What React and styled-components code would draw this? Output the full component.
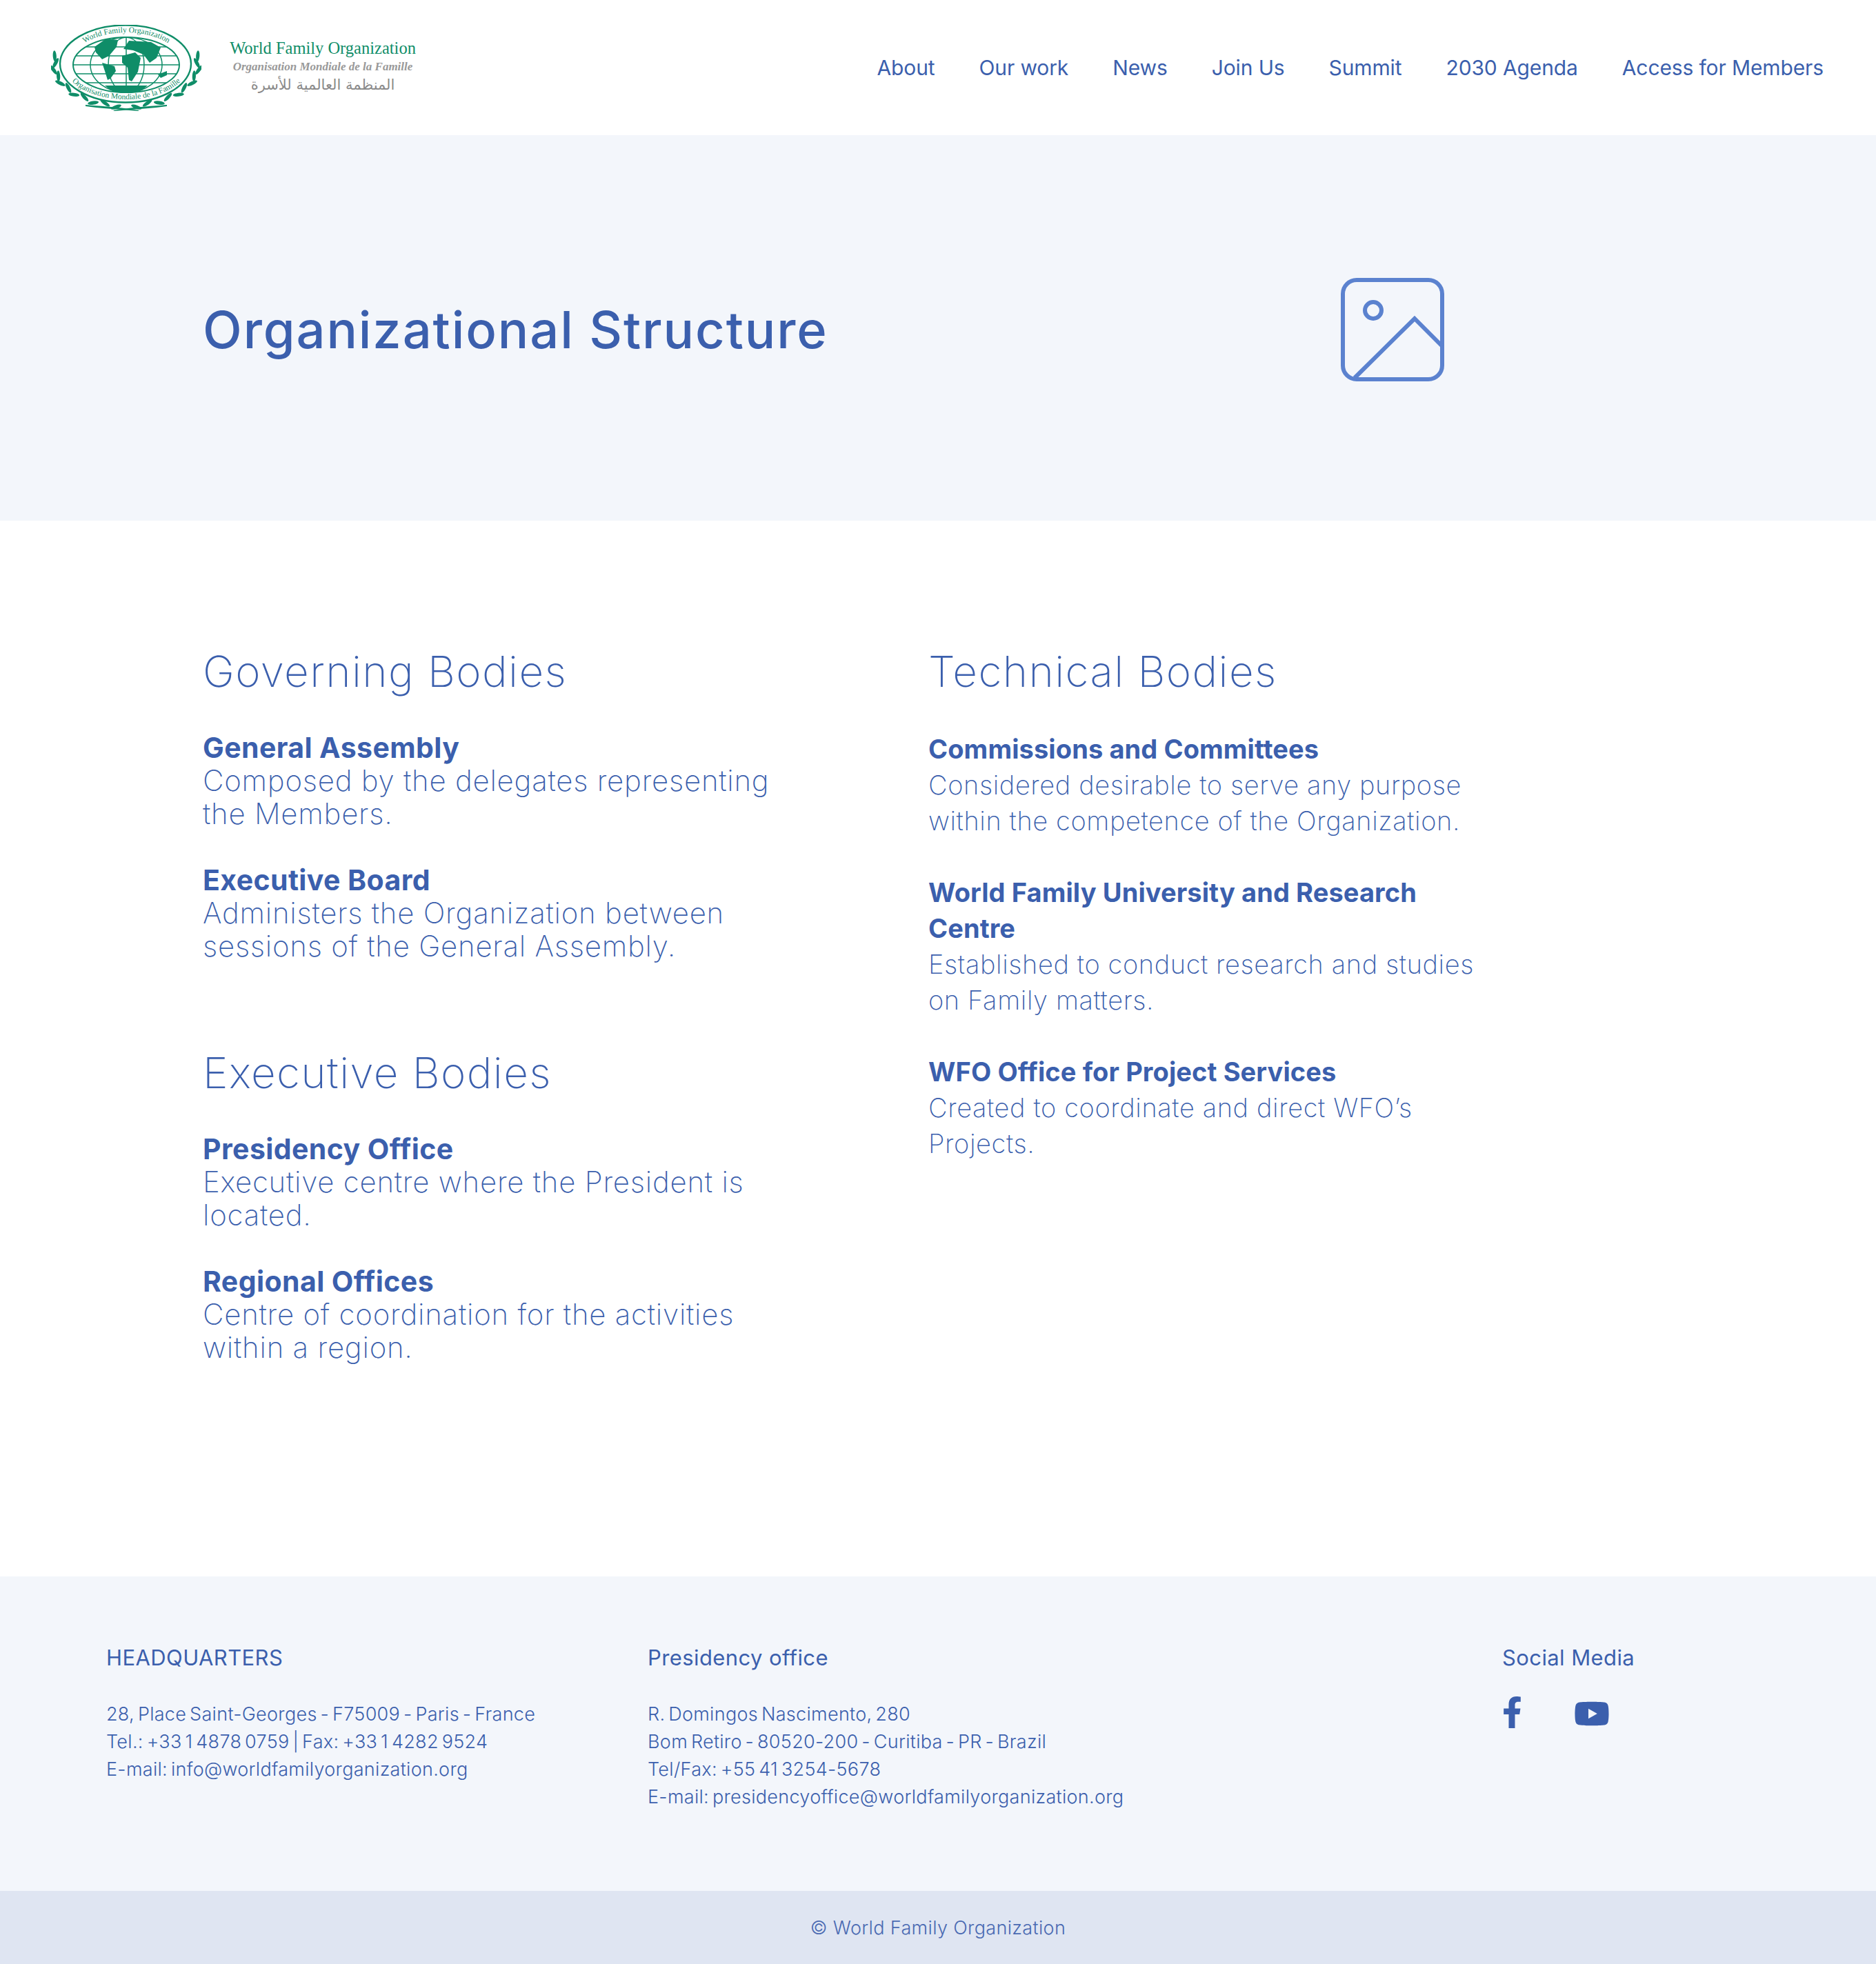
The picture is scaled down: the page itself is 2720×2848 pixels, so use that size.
import React from "react";
import styled, { createGlobalStyle } from "styled-components";
import { FaFacebookF, FaYoutube } from "react-icons/fa";

const BLUE = "#3b5fad";
const PALE = "#f3f6fb";
const GREEN = "#0f8d68";

const GlobalStyle = createGlobalStyle`
  html, body {
    margin: 0;
    padding: 0;
    background: #fff;
    font-family: Inter, "Open Sans", sans-serif;
    color: ${BLUE};
  }
  h1, h2, h3, p, ul {
    margin: 0;
    padding: 0;
  }
  ul { list-style: none; }
`;

const Page = styled.div`
  width: 2720px;
`;

const Header = styled.header`
  height: 196px;
  display: flex;
  align-items: center;
  justify-content: space-between;
  padding: 0 76px 0 74px;
  box-sizing: border-box;
`;

const Brand = styled.div`
  display: flex;
  align-items: center;
  gap: 44px;
`;

const BrandText = styled.div`
  display: flex;
  flex-direction: column;
  align-items: center;
  width: 264px;
  margin-top: -3px;
`;

const BrandEn = styled.span`
  font-family: "Liberation Serif", serif;
  font-size: 24.5px;
  line-height: 27px;
  color: ${GREEN};
  white-space: nowrap;
`;

const BrandFr = styled.span`
  font-family: "Liberation Serif", serif;
  font-style: italic;
  font-weight: bold;
  font-size: 17px;
  line-height: 27px;
  color: #999;
  white-space: nowrap;
`;

const BrandAr = styled.span`
  font-family: "DejaVu Sans", sans-serif;
  font-size: 21px;
  line-height: 27px;
  color: #8a8a8a;
  white-space: nowrap;
`;

const Nav = styled.ul`
  display: flex;
  gap: 64px;
`;

const NavItem = styled.li`
  font-size: 30px;
  font-weight: 400;
  letter-spacing: -0.12px;
  line-height: 36px;
  white-space: nowrap;
`;

const Hero = styled.section`
  height: 559px;
  background: ${PALE};
  display: grid;
  grid-template-columns: 1650px 150px;
  align-items: center;
  padding: 4px 0 0 294px;
  box-sizing: border-box;
`;

const HeroTitle = styled.h1`
  font-size: 74px;
  font-weight: 500;
  letter-spacing: 1.9px;
  line-height: 88px;
`;

const HeroIcon = styled.svg`
  display: block;
  width: 150px;
  height: 150px;
  fill: none;
  stroke: #5b82cf;
  stroke-width: 6;
`;

const Main = styled.main`
  height: 1531px;
  display: grid;
  grid-template-columns: 1052px 840px;
  padding: 180px 0 0 294px;
  box-sizing: border-box;
`;

const Column = styled.div`
  display: flex;
  flex-direction: column;
`;

const SectionTitle = styled.h2`
  font-size: 62px;
  font-weight: 250;
  letter-spacing: 1.4px;
  line-height: 78px;
  margin-bottom: ${(p) => p.$after}px;
`;

const Group = styled.div`
  display: flex;
  flex-direction: column;
  gap: ${(p) => p.$gap}px;
  margin-bottom: ${(p) => p.$after || 0}px;
`;

const Item = styled.div`
  max-width: ${(p) => (p.$wide ? 850 : 810)}px;
`;

const ItemTitle = styled.h3`
  font-size: ${(p) => (p.$wide ? 41 : 38)}px;
  font-weight: 700;
  letter-spacing: ${(p) => (p.$wide ? 0.4 : 0.1)}px;
  line-height: ${(p) => (p.$wide ? 48 : 52)}px;
`;

const ItemText = styled.p`
  font-size: ${(p) => (p.$wide ? 42 : 38)}px;
  font-weight: 250;
  letter-spacing: ${(p) => (p.$wide ? 0.75 : 0.6)}px;
  line-height: ${(p) => (p.$wide ? 48 : 52)}px;
`;

const Footer = styled.footer`
  height: 456px;
  background: ${PALE};
  display: grid;
  grid-template-columns: 785px 1239px 1fr;
  padding: 94px 0 0 154px;
  box-sizing: border-box;
`;

const FooterTitle = styled.h3`
  font-size: 31px;
  font-weight: 400;
  letter-spacing: 0.4px;
  line-height: 48px;
  margin-bottom: 38px;
`;

const FooterLine = styled.p`
  font-size: 27px;
  font-weight: 300;
  letter-spacing: 0.3px;
  word-spacing: -3px;
  line-height: 40px;
  white-space: nowrap;
`;

const Socials = styled.div`
  display: flex;
  align-items: center;
  gap: 75px;
  height: 46px;
  margin-top: -6px;
  color: ${BLUE};
`;

const FacebookIcon = styled(FaFacebookF)`
  width: 29px;
  height: 46px;
`;

const YoutubeIcon = styled(FaYoutube)`
  width: 52px;
  height: 46px;
  margin-top: 4px;
`;

const CopyRight = styled.div`
  height: 106px;
  background: #dfe5f2;
  display: flex;
  align-items: center;
  justify-content: center;
  font-size: 27px;
  font-weight: 300;
  letter-spacing: 0.35px;
  color: #4a6ab2;
`;

const navLinks = ["About", "Our work", "News", "Join Us", "Summit", "2030 Agenda", "Access for Members"];

// laurel leaves along a wide ellipse, from the upper side down to the stem
const laurel = Array.from({ length: 11 }, (_, i) => {
  const a = ((168 + i * 9.4) * Math.PI) / 180;
  const x = 109 + 104 * Math.cos(a) * (i % 2 ? 0.985 : 1.02);
  const y = 58 - 60 * Math.sin(a) * (i % 2 ? 0.97 : 1.03);
  const tangent = (Math.atan2(60 * Math.cos(a), 104 * Math.sin(a)) * 180) / Math.PI;
  return { x, y, r: tangent + (i % 2 ? 24 : -24) };
});

const lat = [-26, -13, 0, 13, 26].map((d) => {
  const half = 77 * Math.sqrt(1 - (d / 40) ** 2);
  return `M${109 - half} ${58 + d}H${109 + half}`;
});

function Logo() {
  return (
    <svg width="218" height="125" viewBox="0 0 218 125" fill="none">
      <defs>
        <path id="ringTop" d="M27 58A82 47 0 0 1 191 58" />
        <path id="ringBottom" d="M18 56A91 52 0 0 0 200 56" />
      </defs>
      <ellipse cx="108" cy="56.5" rx="95" ry="56" stroke={GREEN} strokeWidth="2.4" />
      <g stroke={GREEN} strokeWidth="1.5">
        <ellipse cx="109" cy="58" rx="77" ry="40" strokeWidth="2" />
        <ellipse cx="109" cy="58" rx="52" ry="40" />
        <ellipse cx="109" cy="58" rx="26" ry="40" />
        <path d={`M109 18V98${lat.join("")}`} />
      </g>
      <g fill={GREEN}>
        <path d="M63 32 80 20 97 22 95 32 84 45 74 50 65 40Z" />
        <path d="M74 55 92 60 94 67 86 78 82 80 78 67Z" />
        <path d="M105 35 113 23 145 25 159 33 153 48 143 55 134 43 119 37Z" />
        <path d="M103 45 122 40 130 48 126 68 117 82 113 80 111 62 103 55Z" />
        <path d="M155 72 168 67 168 73 159 77Z" />
        <path d="M78 88H140L132 95Q109 100 86 95Z" />
      </g>
      <g fill={GREEN} fontFamily="Liberation Serif, serif" fontSize="11.5">
        <text>
          <textPath href="#ringTop" startOffset="50%" textAnchor="middle">World Family Organization</textPath>
        </text>
        <text>
          <textPath href="#ringBottom" startOffset="50%" textAnchor="middle">Organisation Mondiale de la Famille</textPath>
        </text>
      </g>
      <g fill={GREEN}>
        {laurel.map(({ x, y, r }, i) => (
          <g key={i}>
            <ellipse cx={x} cy={y} rx="8" ry="2.6" transform={`rotate(${r} ${x} ${y})`} />
            <ellipse cx={218 - x} cy={y} rx="8" ry="2.6" transform={`rotate(${-r} ${218 - x} ${y})`} />
          </g>
        ))}
        <path d="M50 116C70 118 90 118 128 124L126 125C92 122 70 121 50 118Z" />
        <path d="M168 116C148 118 128 118 90 124L92 125C126 122 148 121 168 118Z" />
      </g>
    </svg>
  );
}

function Entry({ title, text, wide }) {
  return (
    <Item $wide={wide}>
      <ItemTitle $wide={wide}>{title}</ItemTitle>
      <ItemText $wide={wide}>{text}</ItemText>
    </Item>
  );
}

export default function App() {
  return (
    <Page>
      <GlobalStyle />
      <Header>
        <Brand>
          <Logo />
          <BrandText>
            <BrandEn>World Family Organization</BrandEn>
            <BrandFr>Organisation Mondiale de la Famille</BrandFr>
            <BrandAr>المنظمة العالمية للأسرة</BrandAr>
          </BrandText>
        </Brand>
        <Nav>
          {navLinks.map((link) => (
            <NavItem key={link}>{link}</NavItem>
          ))}
        </Nav>
      </Header>
      <Hero>
        <HeroTitle>Organizational Structure</HeroTitle>
        <HeroIcon viewBox="0 0 150 150">
          <rect x="3" y="3" width="144" height="144" rx="20" />
          <circle cx="47" cy="47" r="12" />
          <path d="M20 145 107 59 147 99" />
        </HeroIcon>
      </Hero>
      <Main>
        <Column>
          <SectionTitle $after={47}>Governing Bodies</SectionTitle>
          <Group $gap={48} $after={121}>
            <Entry wide title="General Assembly" text="Composed by the delegates representing the Members." />
            <Entry wide title="Executive Board" text="Administers the Organization between sessions of the General Assembly." />
          </Group>
          <SectionTitle $after={47}>Executive Bodies</SectionTitle>
          <Group $gap={48}>
            <Entry wide title="Presidency Office" text="Executive centre where the President is located." />
            <Entry wide title="Regional Offices" text="Centre of coordination for the activities within a region." />
          </Group>
        </Column>
        <Column>
          <SectionTitle $after={47}>Technical Bodies</SectionTitle>
          <Group $gap={52}>
            <Entry title="Commissions and Committees" text="Considered desirable to serve any purpose within the competence of the Organization." />
            <Entry title="World Family University and Research Centre" text="Established to conduct research and studies on Family matters." />
            <Entry title="WFO Office for Project Services" text="Created to coordinate and direct WFO’s Projects." />
          </Group>
        </Column>
      </Main>
      <Footer>
        <div>
          <FooterTitle>HEADQUARTERS</FooterTitle>
          <FooterLine>28, Place Saint-Georges - F75009 - Paris - France</FooterLine>
          <FooterLine>Tel.: +33 1 4878 0759 | Fax: +33 1 4282 9524</FooterLine>
          <FooterLine>E-mail: info@worldfamilyorganization.org</FooterLine>
        </div>
        <div>
          <FooterTitle>Presidency office</FooterTitle>
          <FooterLine>R. Domingos Nascimento, 280</FooterLine>
          <FooterLine>Bom Retiro - 80520-200 - Curitiba - PR - Brazil</FooterLine>
          <FooterLine>Tel/Fax: +55 41 3254-5678</FooterLine>
          <FooterLine>E-mail: presidencyoffice@worldfamilyorganization.org</FooterLine>
        </div>
        <div>
          <FooterTitle>Social Media</FooterTitle>
          <Socials>
            <FacebookIcon />
            <YoutubeIcon />
          </Socials>
        </div>
      </Footer>
      <CopyRight>© World Family Organization</CopyRight>
    </Page>
  );
}
